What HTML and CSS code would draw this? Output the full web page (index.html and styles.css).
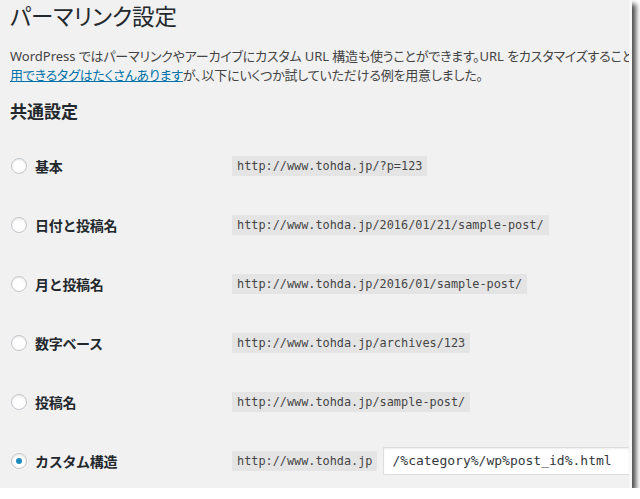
FILE: index.html
```html
<!DOCTYPE html>
<html lang="ja">
<head>
<meta charset="utf-8">
<title>パーマリンク設定</title>
<link rel="stylesheet" href="styles.css">
</head>
<body>
<div class="shot">
  <div class="wrap">
    <h1 class="title">パーマリンク設定</h1>
    <p class="intro"><span class="lat">WordPress</span> ではパーマリンクやアーカイブにカスタム <span class="lat">URL</span> 構造も使うことができます。<span class="lat">URL</span> をカスタマイズすること<br><a href="#" class="link">用できるタグはたくさんあります</a>が、以下にいくつか試していただける例を用意しました。</p>
    <h2 class="section">共通設定</h2>
    <div class="rows">
      <div class="row">
        <label class="opt"><input type="radio" name="sel" class="radio"><span class="lbl">基本</span></label>
        <div class="val"><code class="code">http://www.tohda.jp/?p=123</code></div>
      </div>
      <div class="row">
        <label class="opt"><input type="radio" name="sel" class="radio"><span class="lbl">日付と投稿名</span></label>
        <div class="val"><code class="code">http://www.tohda.jp/2016/01/21/sample-post/</code></div>
      </div>
      <div class="row">
        <label class="opt"><input type="radio" name="sel" class="radio"><span class="lbl">月と投稿名</span></label>
        <div class="val"><code class="code">http://www.tohda.jp/2016/01/sample-post/</code></div>
      </div>
      <div class="row">
        <label class="opt"><input type="radio" name="sel" class="radio"><span class="lbl">数字ベース</span></label>
        <div class="val"><code class="code">http://www.tohda.jp/archives/123</code></div>
      </div>
      <div class="row">
        <label class="opt"><input type="radio" name="sel" class="radio"><span class="lbl">投稿名</span></label>
        <div class="val"><code class="code">http://www.tohda.jp/sample-post/</code></div>
      </div>
      <div class="row">
        <label class="opt"><input type="radio" name="sel" class="radio" checked><span class="lbl">カスタム構造</span></label>
        <div class="val"><code class="code">http://www.tohda.jp</code><input type="text" class="field" value="/%category%/wp%post_id%.html"></div>
      </div>
    </div>
  </div>
</div>
</body>
</html>
```

FILE: styles.css
```css
html, body {
  margin: 0;
  padding: 0;
  background: #ffffff;
}

.shot {
  width: 629px;
  height: 488px;
  background: #f1f1f1;
  border-right: 3px solid #f8f8f8;
  box-shadow: 4px 4px 5px rgba(0, 0, 0, 0.7);
  overflow: hidden;
  font-family: "Noto Sans", "Noto Sans CJK JP", sans-serif;
  color: #23282d;
}

.wrap {
  padding-top: 2px;
}

.title {
  margin: 0 0 0 10px;
  font-size: 22.5px;
  line-height: 30px;
  font-weight: 400;
  color: #23282d;
  font-feature-settings: "palt";
}

.intro {
  margin: 15px 0 0 10px;
  font-size: 13px;
  line-height: 19px;
  color: #444444;
  white-space: nowrap;
  letter-spacing: -0.2px;
  font-feature-settings: "palt";
}

.lat {
  letter-spacing: 0;
}

.link {
  color: #0073aa;
  text-decoration: underline;
}

.section {
  margin: 17px 0 0 10px;
  font-size: 17px;
  line-height: 20px;
  font-weight: 700;
  color: #23282d;
}

.rows {
  margin-top: 14px;
  display: flex;
  flex-direction: column;
}

.row {
  height: 59px;
  display: flex;
  align-items: center;
}

.opt {
  width: 232px;
  flex: none;
  display: flex;
  align-items: center;
}

.radio {
  -webkit-appearance: none;
  appearance: none;
  margin: 0 8px 0 11px;
  width: 16px;
  height: 16px;
  border: 1px solid #c2c6ca;
  border-radius: 50%;
  background: #ffffff;
  box-shadow: inset 0 1px 2px rgba(0, 0, 0, 0.1);
  box-sizing: border-box;
  display: flex;
  align-items: center;
  justify-content: center;
}

.radio:checked::before {
  content: "";
  width: 6px;
  height: 6px;
  border-radius: 50%;
  background: #1e8cbe;
}

.lbl {
  font-size: 14px;
  font-weight: 700;
  letter-spacing: -0.3px;
  color: #23282d;
}

.val {
  flex: 1;
  display: flex;
  align-items: center;
  min-width: 0;
}

.code {
  display: inline-block;
  padding: 3px 5px 2px;
  line-height: 15px;
  background: #e4e4e4;
  color: #444444;
  font-family: "DejaVu Sans Mono", monospace;
  font-size: 11.85px;
  white-space: nowrap;
}

.field {
  flex: 1;
  min-width: 0;
  margin: 0 0 0 6px;
  height: 28px;
  box-sizing: border-box;
  padding: 0 8px;
  border: 1px solid #dddddd;
  border-right: 0;
  background: #ffffff;
  box-shadow: inset 0 1px 2px rgba(0, 0, 0, 0.07);
  color: #32373c;
  font-family: "DejaVu Sans Mono", monospace;
  font-size: 13px;
  outline: none;
}
```
